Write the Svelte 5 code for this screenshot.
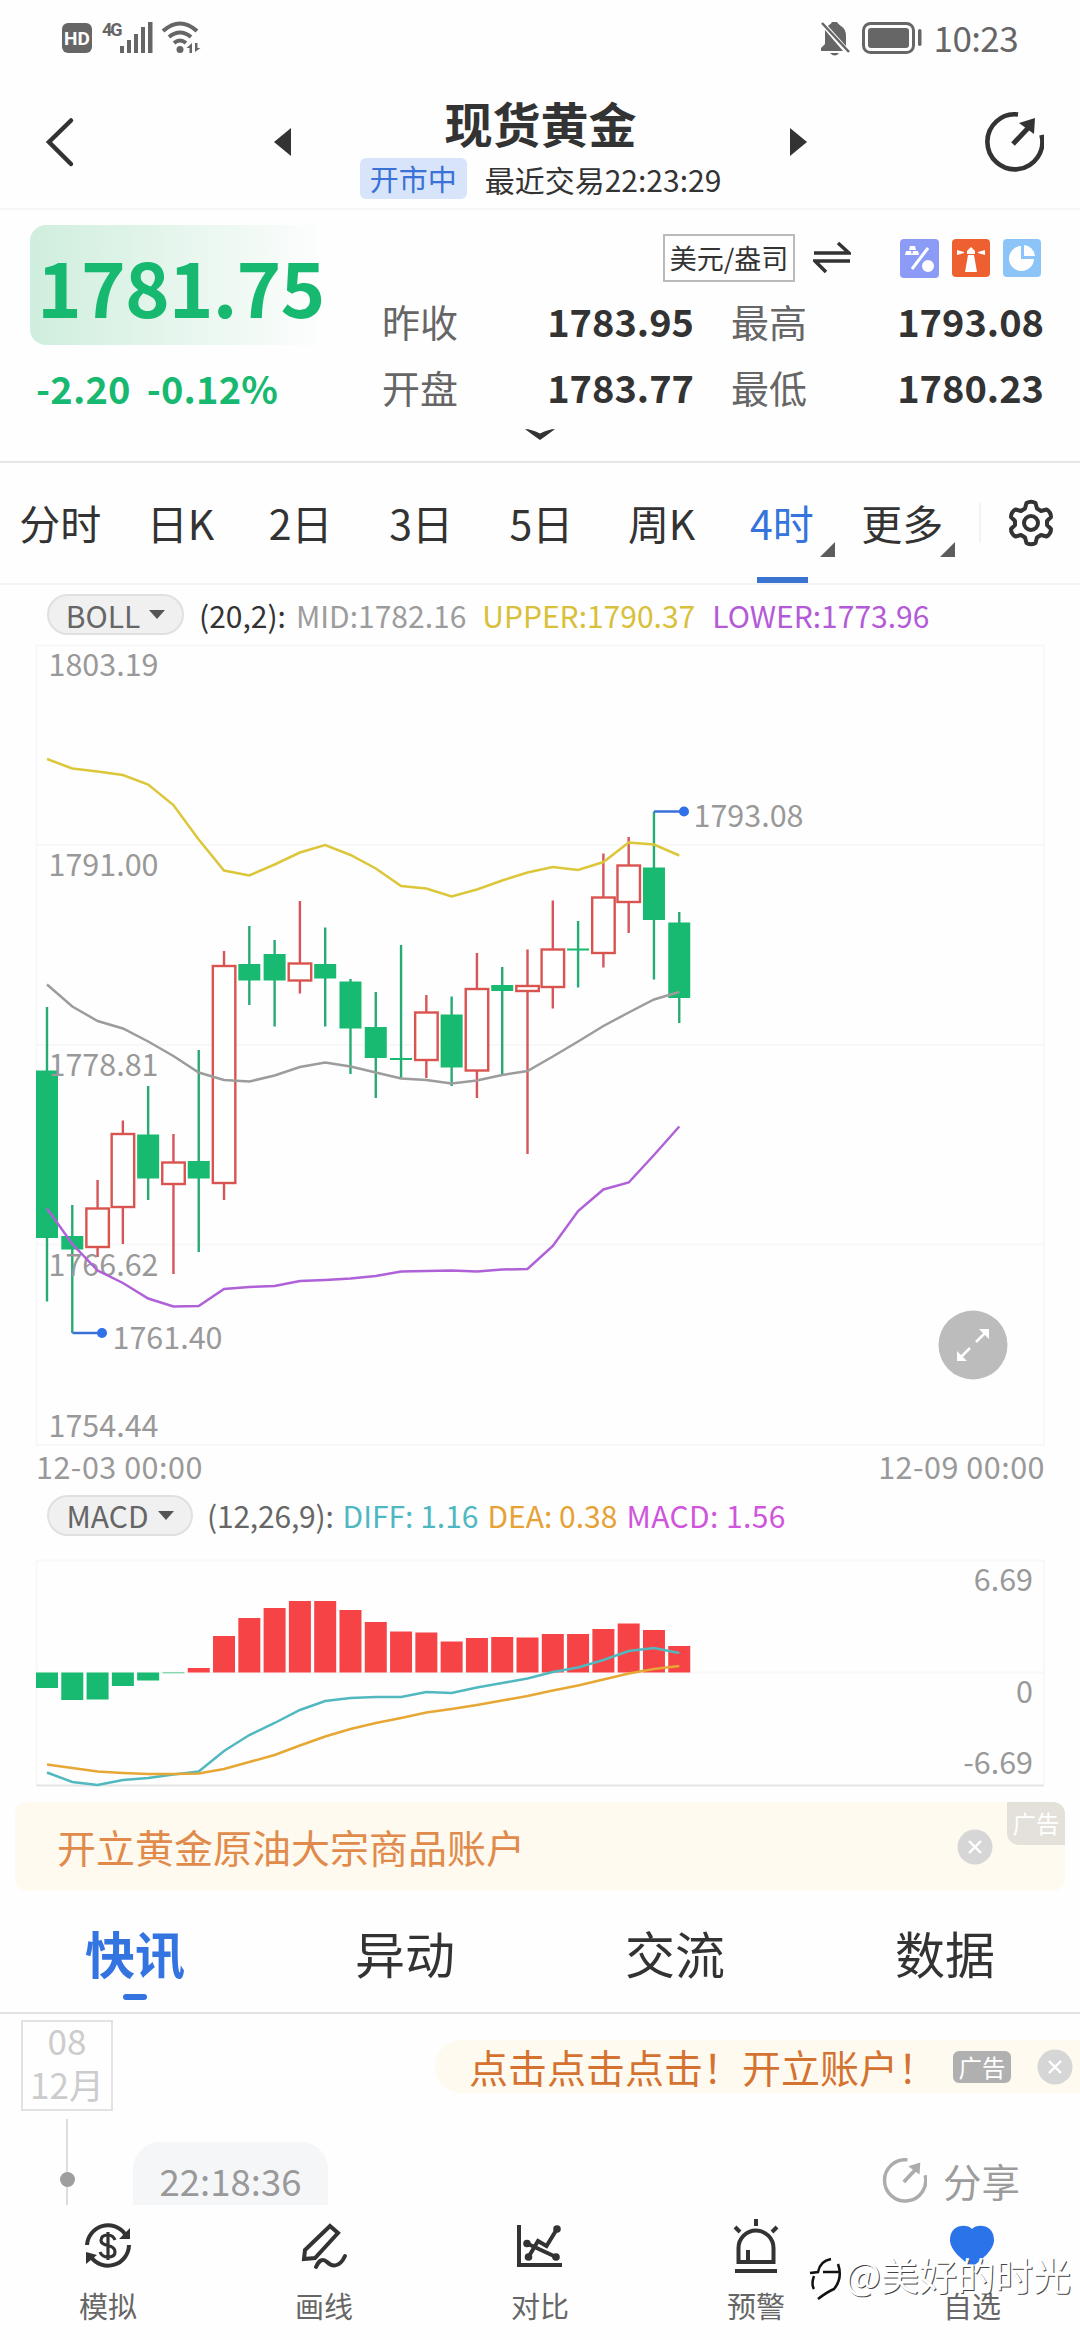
<script lang="ts">
  type Candle = [up: number, high: number, top: number, bottom: number, low: number];

  const step = 25.29;
  const cx = (i: number) => 47 + step * i;
  const line = (ys: number[]) => ys.map((y, i) => `${cx(i).toFixed(1)},${y}`).join(" ");

  const candles: Candle[] = [
    [0, 1007, 1070.5, 1238, 1301.5],
    [0, 1205, 1236, 1249.5, 1333],
    [1, 1180, 1208.5, 1247, 1257],
    [1, 1120.5, 1134, 1207, 1244],
    [0, 1086, 1134.5, 1178.5, 1200],
    [1, 1134, 1162.5, 1184, 1274],
    [0, 1050, 1161, 1178.5, 1252],
    [1, 951, 966, 1183, 1200],
    [0, 926, 964, 980.5, 1005],
    [0, 940, 954, 980.5, 1026.5],
    [1, 901, 963.5, 980.5, 993.5],
    [0, 927.5, 964, 978.5, 1026.5],
    [0, 979, 981.5, 1028.5, 1074],
    [0, 992, 1027, 1058, 1098],
    [0, 945, 1058, 1060, 1079],
    [1, 995, 1012.5, 1060, 1078],
    [0, 996.5, 1014.5, 1067.5, 1086],
    [1, 953, 989, 1070.5, 1098],
    [0, 967, 985, 991, 1075],
    [1, 949.5, 986, 991, 1154],
    [1, 900.5, 949.5, 987, 1008.5],
    [0, 921, 948.5, 950.5, 987.5],
    [1, 853.5, 897.5, 953, 967.5],
    [1, 837, 865.5, 902, 933],
    [0, 811.5, 867.5, 920, 979.5],
    [0, 912, 922.5, 998, 1023],
  ];

  const upper = [759, 768.5, 771.5, 775, 784.5, 805, 839.5, 870.5, 875.5, 864.5, 852.5, 845, 855, 868.5, 886, 888.5, 896.5, 889.5, 880.5, 872.5, 867, 870, 862, 842.5, 844.5, 855.5];
  const mid = [984.5, 1006.5, 1021, 1028.5, 1041.5, 1056, 1072.5, 1080, 1081.5, 1075.5, 1067, 1062.5, 1066.5, 1072.5, 1078.5, 1080, 1083.5, 1080.5, 1075, 1071, 1056.5, 1041.5, 1026, 1012.5, 999.5, 992];
  const lower = [1208.5, 1244, 1270.5, 1283, 1298.5, 1306.5, 1306, 1289, 1287, 1286, 1281, 1280, 1278.5, 1276, 1271.5, 1271, 1270.5, 1271.5, 1269.5, 1269, 1246, 1211, 1189.5, 1182.5, 1155, 1126.5];

  const zero = 1672.5;
  const bars = [1688, 1700, 1699.5, 1686, 1680.5, 1673.2, 1668, 1636, 1618, 1608, 1601, 1601, 1610, 1622, 1631.5, 1632.5, 1641.5, 1638, 1637, 1637.5, 1634, 1634, 1629, 1623.5, 1630, 1646];
  const diff = [1772.5, 1782, 1785, 1780, 1778, 1774.5, 1771.5, 1751, 1735, 1723, 1710, 1701, 1698, 1697, 1697, 1692, 1693, 1687.5, 1683, 1678.5, 1672, 1667.5, 1660, 1651, 1648, 1653];
  const dea = [1764.5, 1768, 1771.5, 1773, 1774, 1774, 1773.5, 1769, 1762, 1755, 1745.5, 1736.5, 1729, 1723, 1718, 1712.5, 1709, 1705, 1700.5, 1696, 1690.5, 1685.5, 1679.5, 1673.5, 1669, 1666];

  const priceLabels: [string, number][] = [
    ["1803.19", 676],
    ["1791.00", 876],
    ["1778.81", 1076],
    ["1766.62", 1276],
    ["1754.44", 1437],
  ];

  const periods = ["分时", "日K", "2日", "3日", "5日", "周K", "4时", "更多"];
  const sections = ["快讯", "异动", "交流", "数据"];
  let period = $state("4时");
  let section = $state("快讯");
</script>

{#snippet share()}
  <svg class="share-icon" viewBox="0 0 60 60" fill="none" stroke="currentColor">
    <path d="M34 2.5A27.5 27.5 0 1 0 57.5 23" stroke-width="4.6" />
    <path d="M29 32L46 14" stroke-width="5" />
    <path d="M51 6L50 22L35 11Z" fill="currentColor" stroke="none" />
  </svg>
{/snippet}

{#snippet close()}
  <svg class="close" viewBox="0 0 36 36">
    <circle cx="18" cy="18" r="17.5" fill="#d6d6d6" />
    <path d="M12 12L24 24M24 12L12 24" stroke="#fff" stroke-width="2.4" />
  </svg>
{/snippet}

<main>
  <div class="status">
    <svg width="150" height="40" viewBox="60 18 150 40" fill="#666">
      <rect x="62" y="23" width="30" height="30" rx="6" />
      <text x="77" y="44.5" class="hd">HD</text>
      <text x="102" y="36" class="net">4G</text>
      <path d="M120 46h4v7h-4zM127 40h4v13h-4zM134 34h4v19h-4zM141 27h4v26h-4zM148 22h4.500v31h-4.500z" />
      <g fill="none" stroke="#666" stroke-width="4">
        <path d="M163 31Q180 16 197 31" />
        <path d="M169 37Q180 28 191 37" />
        <path d="M174 43Q180 38 186 43" />
      </g>
      <circle cx="180" cy="49.500" r="3.500" />
      <path d="M192 43v10h-2.500v-5h-3zM195 52V43h2.500v5h3z" />
    </svg>
    <div class="status-right">
      <svg width="104" height="40" viewBox="818 18 104 40" fill="#666">
        <path d="M829 25Q831 24 832 22H837Q838 24 841 26Q846 29 846 36V46L828 26ZM825 30L843 51H821V48L825 44Z" />
        <path d="M830 53h9q-4 5-9 0z" />
        <path d="M822 23L849 52" stroke="#666" stroke-width="2.5" />
        <rect x="863.500" y="23.500" width="50" height="29" rx="7" fill="none" stroke="#666" stroke-width="3" />
        <rect x="868" y="28" width="41" height="20" rx="3" />
        <rect x="918" y="29" width="3.500" height="17" rx="1.700" />
      </svg>
      <span>10:23</span>
    </div>
  </div>

  <header>
    <svg width="30" height="52" viewBox="0 0 30 52" fill="none" stroke="#333" stroke-width="4.500" stroke-linecap="round"><path d="M26 4.500L4 26L26 48" /></svg>
    <div class="instrument">
      <svg width="18" height="28" viewBox="0 0 18 28" fill="#333"><path d="M17 0V28L0 14Z" /></svg>
      <div class="name">
        <h1>现货黄金</h1>
        <p><span class="open">开市中</span>最近交易22:23:29</p>
      </div>
      <svg width="18" height="28" viewBox="0 0 18 28" fill="#333"><path d="M1 0V28L18 14Z" /></svg>
    </div>
    {@render share()}
  </header>

  <section class="quote">
    <div class="last">
      <div class="price">1781.75</div>
      <div class="change"><span>-2.20</span><span>-0.12%</span></div>
    </div>
    <div class="detail">
      <div class="tools">
        <span class="unit">美元/盎司</span>
        <svg width="38" height="34" viewBox="0 0 38 34" fill="none" stroke="#333" stroke-width="3.500"><path d="M1 12H36L25 2M37 20H2L13 31" /></svg>
        <div class="apps">
          <svg width="39" height="39" viewBox="0 0 39 39"><rect width="39" height="39" rx="4" fill="#8b9bf6" /><path d="M28 9L12 30" stroke="#fff" stroke-width="3" /><path d="M10 7h5l1 4h-7zM6 12h5l1 4H5zM13 12h5l1 4h-7z" fill="#fff" /><circle cx="28" cy="27" r="6" fill="#fff" /></svg>
          <svg width="38" height="38" viewBox="0 0 38 38"><rect width="38" height="38" rx="4" fill="#ee6030" /><path d="M16 16h6l3 17H13zM15 12l4-4 4 4v3H15zM5 11l7 2v1l-7 2zM33 11l-7 2v1l7 2z" fill="#fff" /></svg>
          <svg width="38" height="38" viewBox="0 0 38 38"><rect width="38" height="38" rx="4" fill="#8dc4f7" /><path d="M18 7A12.500 12.500 0 1 0 31 20H18Z" fill="#fff" /><path d="M21 6A12 12 0 0 1 32 17H21Z" fill="#fff" /></svg>
        </div>
      </div>
      <dl>
        <dt>昨收</dt><dd>1783.95</dd><dt>最高</dt><dd>1793.08</dd>
        <dt>开盘</dt><dd>1783.77</dd><dt>最低</dt><dd>1780.23</dd>
      </dl>
    </div>
    <svg class="more" width="30" height="11" viewBox="0 0 30 11" fill="#333"><path d="M0 0Q6 0 15 4.500Q24 0 30 0Q25 4 15 11Q5 4 0 0Z" /></svg>
  </section>

  <nav class="periods">
    {#each periods as p}
      <button class:active={p === period} onclick={() => (period = p)}>
        {p}
        {#if p === "4时" || p === "更多"}<i></i>{/if}
      </button>
    {/each}
    <div class="settings">
      <svg width="46" height="48" viewBox="0 0 46 48" fill="none" stroke="#333" stroke-width="4" stroke-linejoin="round">
        <path d="M18.500 4Q23 1.500 27.500 4L29 9.500L33 12L38.500 10.500Q43 13 43 18L39 22V26L43 30Q43 35 38.500 37.500L33 36L29 38.500L27.500 44Q23 46.500 18.500 44L17 38.500L13 36L7.500 37.500Q3 35 3 30L7 26V22L3 18Q3 13 7.500 10.500L13 12L17 9.500Z" />
        <circle cx="23" cy="24" r="7" />
      </svg>
    </div>
  </nav>

  <div class="indicator boll">
    <span class="pill">BOLL<i></i></span>
    <span class="params">(20,2):</span>
    <span class="mid">MID:1782.16</span>
    <span class="upper">UPPER:1790.37</span>
    <span class="lower">LOWER:1773.96</span>
  </div>

  <svg class="chart" width="1080" height="850" viewBox="0 640 1080 850">
    <path d="M36.500 645.500H1044V1445H36.500ZM36.500 845H1044M36.500 1045H1044M36.500 1244.500H1044" fill="none" stroke="#f8f8f8" stroke-width="2" />
    {#each candles as [up, high, top, bottom, low], i}
      {#if up}
        <path d="M{cx(i)} {high}V{top}M{cx(i)} {bottom}V{low}" stroke="#d5555a" stroke-width="2.4" />
        <rect x={cx(i) - 11.2} y={top} width="22.500" height={bottom - top} fill="#fff" stroke="#d9534f" stroke-width="2.4" />
      {:else}
        <path d="M{cx(i)} {high}V{low}" stroke="#27ab74" stroke-width="2.4" />
        <rect x={cx(i) - 11} y={top} width="22" height={bottom - top} fill="#17ba70" />
      {/if}
    {/each}
    {#each priceLabels as [label, y]}
      <text x="48.500" {y}>{label}</text>
    {/each}
    <g fill="none" stroke-width="2.5">
      <polyline points={line(upper)} stroke="#dcc63a" />
      <polyline points={line(mid)} stroke="#9c9c9c" />
      <polyline points={line(lower)} stroke="#b061d8" />
      <path d="M654 811.500H684M72.500 1333H102" stroke="#3a70d8" />
    </g>
    <circle cx="684" cy="811.500" r="5" fill="#3070e8" />
    <circle cx="102" cy="1333" r="5" fill="#3070e8" />
    <text x="693.500" y="827">1793.08</text>
    <text x="112.500" y="1349">1761.40</text>
    <text x="36" y="1479" class="day">12-03 00:00</text>
    <text x="1045" y="1479" class="day" text-anchor="end">12-09 00:00</text>
    <circle cx="973" cy="1345" r="34.500" fill="#bcbcbc" />
    <path d="M976 1342L985 1333M970 1348L961 1357" stroke="#fff" stroke-width="2.500" />
    <path d="M989 1329V1339L979 1329ZM957 1361V1351L967 1361Z" fill="#fff" />
  </svg>

  <div class="indicator macd">
    <span class="pill">MACD<i></i></span>
    <span class="params">(12,26,9):</span>
    <span class="diff">DIFF: 1.16</span>
    <span class="dea">DEA: 0.38</span>
    <span class="hist">MACD: 1.56</span>
  </div>

  <svg class="chart" width="1080" height="250" viewBox="0 1540 1080 250">
    <path d="M36.500 1785V1560.500H1044V1785M36.500 1672.500H1044" fill="none" stroke="#f8f8f8" stroke-width="2" />
    <path d="M36.500 1785.500H1044" stroke="#e4e4e4" stroke-width="2" />
    {#each bars as y, i}
      <rect x={cx(i) - 11} y={Math.min(y, zero)} width="22" height={Math.abs(y - zero)} fill={y > zero ? "#17ba70" : "#f54346"} />
    {/each}
    <g fill="none" stroke-width="2.5">
      <polyline points={line(diff)} stroke="#52b8c0" />
      <polyline points={line(dea)} stroke="#e6a734" />
    </g>
    <text x="1033" y="1590.500" text-anchor="end">6.69</text>
    <text x="1033" y="1703" text-anchor="end">0</text>
    <text x="1033" y="1774" text-anchor="end">-6.69</text>
  </svg>

  <div class="banner">
    <span>开立黄金原油大宗商品账户</span>
    {@render close()}
    <em>广告</em>
  </div>

  <nav class="sections">
    {#each sections as s}
      <button class:active={s === section} onclick={() => (section = s)}>{s}</button>
    {/each}
  </nav>

  <section class="feed">
    <div class="timeline">
      <div class="date"><span>08</span><span>12月</span></div>
      <div class="rail"></div>
    </div>
    <div class="entries">
      <div class="promo">
        <span>点击点击点击！开立账户！</span>
        <em>广告</em>
        {@render close()}
      </div>
      <div class="entry">
        <time>22:18:36</time>
        <span class="share">{@render share()}分享</span>
      </div>
    </div>
  </section>

  <nav class="bottom">
    <div>
      <svg viewBox="0 0 56 56" fill="none" stroke="#333" stroke-width="4">
        <path d="M7 27A21 21 0 0 1 45 16M49 27A21 21 0 0 1 11 39" />
        <path d="M50 10V21H39ZM6 46V34L17 37Z" fill="#333" stroke="none" />
        <path d="M35 22Q33 17 28 17Q21 17 21 22.500Q21 26 28 27.500Q35 29 35 34Q35 39 28 39Q22 39 20 34M28 14V42" stroke-width="3.200" />
      </svg>
      模拟
    </div>
    <div>
      <svg viewBox="0 0 56 56" fill="none" stroke="#333" stroke-width="4" stroke-linecap="round" stroke-linejoin="miter">
        <path d="M34 8L42 15L19 40L8 41L9 32Z" />
        <path d="M20 49C23 42 27 40 31 44S43 51 49 38" />
      </svg>
      画线
    </div>
    <div>
      <svg viewBox="0 0 56 56" fill="none" stroke="#333" stroke-width="4">
        <path d="M7 7V47H50" />
        <path d="M15 25.500L44 39M16.500 39L26 23L34.500 28L45 11" />
        <g fill="#333" stroke="none"><circle cx="15" cy="25.500" r="3.800" /><circle cx="16.500" cy="39" r="3.800" /><circle cx="45" cy="11" r="3.800" /><circle cx="44" cy="39" r="3.800" /></g>
      </svg>
      对比
    </div>
    <div>
      <svg viewBox="0 0 56 56" fill="none" stroke="#333" stroke-width="4">
        <path d="M10.500 44V30A17.500 17.500 0 0 1 45.500 30V44ZM7 53H49M20 44V32M28 8V1M12 14L7 9M44 14L49 9" />
      </svg>
      预警
    </div>
    <div>
      <svg viewBox="0 0 56 56" fill="#2b73e9"><path d="M28 11C34 5 50 7 50 22C50 32 38 41 32 46Q28 48 24 46C18 41 6 32 6 22C6 7 22 5 28 11Z" /></svg>
      自选
    </div>
    <div class="mark">
      <svg width="36" height="44" viewBox="0 0 36 44" fill="none" stroke="#111" stroke-width="2.500"><path d="M1 17L9 16Q11 5 22 3M14 16H31M5 20Q2 28 5 33M29 8Q34 22 25 33Q18 36 9 43" /></svg>
      <span>@美好的时光</span>
    </div>
  </nav>
</main>

<style>
  :global(body) {
    background: #fefefe;
  }

  main {
    width: 1080px;
    height: 2340px;
    overflow: hidden;
    display: flex;
    flex-direction: column;
    background: #fefefe;
    color: #333;
    font-family: "Noto Sans CJK SC", sans-serif;
    font-size: 30px;
    line-height: 1;
  }

  main > * {
    flex-shrink: 0;
    box-sizing: border-box;
  }

  svg {
    display: block;
    flex-shrink: 0;
  }

  button {
    border: 0;
    padding: 0;
    background: none;
    color: inherit;
    font: inherit;
  }

  .status {
    height: 75px;
    padding: 0 62px 0 60px;
    display: flex;
    justify-content: space-between;
    align-items: center;
    color: #666;
    font-size: 35px;
  }

  .status-right {
    display: flex;
    align-items: center;
    gap: 12px;
  }

  .status-right span {
    letter-spacing: -0.6px;
    margin-top: -2px;
  }

  .hd {
    fill: #fff;
    font: bold 19px Roboto, sans-serif;
    text-anchor: middle;
  }

  .net {
    font: bold 18px Roboto, sans-serif;
    letter-spacing: -2px;
  }

  header {
    height: 135px;
    padding: 1px 36px 0 45px;
    display: flex;
    justify-content: space-between;
    align-items: center;
    border-bottom: 2px solid #f5f5f5;
  }

  header .share-icon {
    width: 60px;
    height: 60px;
  }

  .instrument {
    width: 534px;
    margin-left: 22px;
    display: flex;
    justify-content: space-between;
    align-items: center;
  }

  .name {
    padding-top: 7px;
    text-align: center;
  }

  h1 {
    margin: 0;
    font-size: 48px;
    line-height: 60px;
  }

  .name p {
    margin: 6px 0 0;
    display: flex;
    align-items: center;
    gap: 18px;
    font-size: 30px;
  }

  .open {
    padding: 0 10px;
    line-height: 41px;
    border-radius: 6px;
    background: #d8e4f9;
    color: #3a72d8;
    font-size: 29px;
  }

  .quote {
    height: 253px;
    position: relative;
    display: flex;
    justify-content: space-between;
    padding: 15px 36px 0 30px;
    border-bottom: 2px solid #e6e6e6;
  }

  .last {
    color: #17b870;
    font-weight: bold;
  }

  .price {
    width: 300px;
    height: 120px;
    padding-left: 7px;
    box-sizing: border-box;
    border-radius: 16px;
    background: linear-gradient(to right, #cfeedd, #fefefe);
    font-size: 76px;
    line-height: 120px;
    letter-spacing: -0.9px;
    white-space: nowrap;
  }

  .change {
    margin-top: 21px;
    padding-left: 6px;
    display: flex;
    gap: 16px;
    font-size: 38px;
    line-height: 44px;
    letter-spacing: 0.2px;
  }

  .detail {
    width: 662px;
  }

  .tools {
    margin-top: 9px;
    height: 48px;
    display: flex;
    justify-content: flex-end;
    align-items: center;
  }

  .unit {
    box-sizing: border-box;
    width: 132px;
    height: 48px;
    margin-right: 18px;
    border: 2px solid #bbb;
    line-height: 43px;
    font-size: 27px;
    text-align: center;
    white-space: nowrap;
  }

  .apps {
    margin-left: 49px;
    padding-right: 3px;
    display: flex;
    align-items: center;
    gap: 13px;
  }

  dl {
    margin: 6px 0 0;
    display: grid;
    grid-template-columns: 76px 236px 113px 237px;
    grid-auto-rows: 66px;
    line-height: 66px;
    font-size: 38px;
  }

  dt {
    color: #666;
    white-space: nowrap;
  }

  dt:nth-of-type(even) {
    padding-left: 37px;
  }

  dd {
    margin: 0;
    font-weight: bold;
    text-align: right;
  }

  .more {
    position: absolute;
    left: 525px;
    top: 219px;
  }

  .periods {
    height: 122px;
    display: flex;
    border-bottom: 2px solid #f5f5f5;
    font-size: 41px;
  }

  .periods button {
    width: 120.3px;
    position: relative;
    padding-bottom: 1px;
  }

  .periods .active {
    color: #3474dc;
  }

  .periods .active::after {
    content: "";
    position: absolute;
    left: 35px;
    bottom: 0;
    width: 51px;
    height: 6px;
    background: #3a74d0;
  }

  .periods i {
    position: absolute;
    right: 7px;
    bottom: 26px;
    border-left: 15px solid transparent;
    border-bottom: 15px solid #5c5c5c;
  }

  .settings {
    margin: 40px 0 40px 17px;
    padding-left: 27px;
    border-left: 2px solid #f3f3f3;
    display: flex;
    align-items: center;
  }

  .indicator {
    display: flex;
    align-items: center;
    padding-left: 47px;
    white-space: nowrap;
    font-size: 30px;
  }

  .boll {
    height: 55px;
    padding-top: 4px;
  }

  .macd {
    height: 50px;
  }

  .pill {
    box-sizing: border-box;
    width: 137px;
    height: 41px;
    border: 2px solid #e0e0e0;
    border-radius: 21px;
    background: #f0f0f0;
    color: #666;
    display: flex;
    align-items: center;
    justify-content: center;
    gap: 9px;
  }

  .macd .pill {
    width: 146px;
  }

  .pill i {
    border: 8px solid transparent;
    border-top: 9px solid #555;
    border-bottom: 0;
  }

  .params {
    margin-left: 15px;
  }

  .macd .params {
    margin-left: 14px;
    color: #666;
    letter-spacing: -0.2px;
  }

  .mid {
    margin-left: 10px;
    color: #9c9c9c;
  }

  .upper {
    margin-left: 16px;
    color: #d8c03a;
  }

  .lower {
    margin-left: 17px;
    color: #b45ad8;
  }

  .diff {
    margin-left: 9px;
    color: #4eb8c2;
  }

  .dea {
    margin-left: 9px;
    color: #e6a235;
  }

  .hist {
    margin-left: 9px;
    color: #cf55dc;
    letter-spacing: 0.4px;
  }

  .chart text {
    fill: #999;
    font-size: 30.5px;
  }

  .chart .day {
    letter-spacing: 0.5px;
  }

  .banner {
    position: relative;
    margin: 12px 15px 0;
    height: 89px;
    padding: 0 72px 0 42px;
    display: flex;
    align-items: center;
    justify-content: space-between;
    border-radius: 12px;
    background: #fffaef;
    color: #e08b4c;
    font-size: 39px;
  }

  .close {
    width: 36px;
    height: 36px;
  }

  em {
    font-style: normal;
    color: #fff;
    font-size: 23.5px;
    text-align: center;
  }

  .banner em {
    position: absolute;
    top: 0;
    right: 0;
    width: 58px;
    line-height: 43px;
    border-radius: 0 12px 0 12px;
    background: #e4e0da;
  }

  .sections {
    height: 123px;
    display: flex;
    border-bottom: 2px solid #e2e2e2;
    font-size: 50px;
  }

  .sections button {
    flex: 1;
    position: relative;
  }

  .sections .active {
    color: #3474e0;
    font-weight: bold;
  }

  .sections .active::after {
    content: "";
    position: absolute;
    left: 123px;
    bottom: 12px;
    width: 24px;
    height: 6px;
    border-radius: 3px;
    background: #3474e0;
  }

  .feed {
    height: 191px;
    display: flex;
    overflow: hidden;
  }

  .timeline {
    width: 92px;
    margin: 6px 20px 0 21px;
    display: flex;
    flex-direction: column;
    align-items: center;
  }

  .date {
    box-sizing: border-box;
    width: 92px;
    height: 91px;
    border: 2px solid #e2e2e2;
    display: flex;
    flex-direction: column;
    align-items: center;
    color: #ccc;
    font-size: 35px;
    line-height: 35px;
    gap: 9px;
  }

  .rail {
    position: relative;
    margin-top: 8px;
    width: 2px;
    flex: 1;
    background: #ddd;
  }

  .rail::after {
    content: "";
    position: absolute;
    left: -6.5px;
    top: 53px;
    width: 15px;
    height: 15px;
    border-radius: 50%;
    background: #9e9e9e;
  }

  .entries {
    flex: 1;
  }

  .promo {
    box-sizing: border-box;
    height: 53px;
    margin: 26px 0 0 302px;
    padding: 0 6px 0 34px;
    display: flex;
    align-items: center;
    border-radius: 27px 0 0 27px;
    background: #fffaef;
    color: #d47331;
    font-size: 39px;
    white-space: nowrap;
  }

  .promo em {
    width: 58px;
    margin: 0 26px 0 16px;
    line-height: 32px;
    border-radius: 6px;
    background: #b0b0b0;
  }

  .entry {
    margin-top: 49px;
    padding-right: 60px;
    display: flex;
    justify-content: space-between;
  }

  time {
    width: 195px;
    height: 90px;
    border-radius: 27px;
    background: #f5f6f8;
    color: #999;
    font-size: 36.5px;
    line-height: 78px;
    text-align: center;
  }

  .entry .share {
    height: 76px;
    display: flex;
    align-items: center;
    gap: 16px;
    color: #9c9c9c;
    font-size: 38.5px;
  }

  .entry .share-icon {
    width: 45px;
    height: 45px;
    color: #acacac;
  }

  .bottom {
    position: relative;
    height: 136px;
    display: flex;
    background: #fefefe;
    color: #666;
    font-size: 29px;
  }

  .bottom > div:not(.mark) {
    flex: 1;
    display: flex;
    flex-direction: column;
    align-items: center;
    padding-top: 13px;
    gap: 17px;
  }

  .bottom > div:not(.mark) svg {
    width: 56px;
    height: 56px;
    overflow: visible;
  }

  .bottom .mark {
    position: absolute;
    left: 809px;
    top: 51px;
    display: flex;
    align-items: center;
    color: #fff;
    font-size: 38px;
    white-space: nowrap;
    text-shadow: 1px 1px 0 #444;
  }

  .mark span {
    margin-top: -9px;
  }
</style>
